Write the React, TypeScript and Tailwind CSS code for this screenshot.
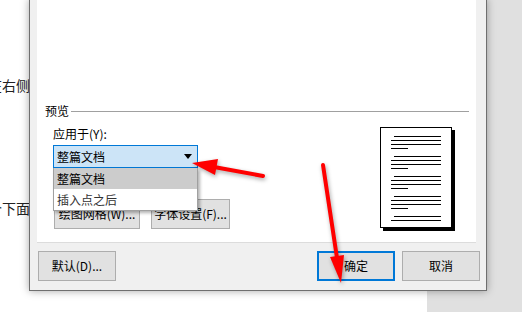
import React from 'react';

const font = { fontFamily: '"Noto Sans CJK SC", "Noto Sans", sans-serif' };

function PagePreview() {
  const groups = [9, 29, 49, 69];
  return (
    <svg width="76" height="105" viewBox="0 0 76 105">
      <rect x="3" y="3" width="72" height="101" fill="#000" />
      <rect x="0.5" y="0.5" width="71" height="100" fill="#fff" stroke="#000" />
      {groups.map((y) => (
        <g key={y} stroke="#000" strokeWidth="1">
          <line x1="14" y1={y + 0.5} x2="61" y2={y + 0.5} />
          <line x1="11" y1={y + 4.5} x2="61" y2={y + 4.5} />
          <line x1="11" y1={y + 8.5} x2="61" y2={y + 8.5} />
          <line x1="11" y1={y + 12.5} x2="28" y2={y + 12.5} />
        </g>
      ))}
      <g stroke="#000" strokeWidth="1">
        <line x1="14" y1="89.5" x2="61" y2="89.5" />
        <line x1="11" y1="93.5" x2="61" y2="93.5" />
      </g>
    </svg>
  );
}

function Button({ label, className = '' }: { label: string; className?: string }) {
  return (
    <div
      className={`flex items-center justify-center h-[30px] whitespace-nowrap bg-[#e1e1e1] border border-[#adadad] text-[12px] text-black ${className}`}
    >
      {label}
    </div>
  );
}

function Arrows() {
  return (
    <svg
      className="absolute inset-0 pointer-events-none"
      width="522"
      height="312"
      style={{ filter: 'drop-shadow(1px 2px 2px rgba(0,0,0,0.35))' }}
    >
      <line x1="263" y1="176" x2="214" y2="167" stroke="#ff0000" strokeWidth="4" strokeLinecap="round" />
      <polygon points="192,163 218,159 215,175" fill="#ff0000" />
      <line x1="323" y1="165" x2="337" y2="258" stroke="#ff0000" strokeWidth="4" strokeLinecap="round" />
      <polygon points="341,283 344,255 330,257" fill="#ff0000" />
    </svg>
  );
}

export default function App() {
  return (
    <div className="relative w-[522px] h-[312px] overflow-hidden flex bg-[#e0e0e0]" style={font}>
      {/* document page */}
      <div className="w-[427px] h-full bg-white text-[14px] leading-5 text-[#222] whitespace-nowrap">
        <div className="mt-[75px] ml-[-12px]">在右侧</div>
        <div className="mt-[103px] ml-[-12px]">个下面</div>
      </div>

      {/* dialog */}
      <div className="absolute left-[29px] top-[-1px] w-[458px] h-[292px] border border-[#6f6f6f] bg-[#f0f0f0] flex flex-col shadow-[0_0_8px_rgba(0,0,0,0.35)]">
        <div className="ml-[7px] w-[439px] h-[243px] bg-white border-b border-[#dcdcdc] pl-[8px] pr-[7px] pt-[103px]">
          <div className="flex items-center h-4">
            <span className="text-[12px] leading-4 text-black">预览</span>
            <div className="flex-1 h-px bg-[#a0a0a0] ml-[2px]" />
          </div>

          <div className="flex">
            <div className="pl-[8px] w-[153px] shrink-0">
              <div className="mt-[7px] text-[12px] leading-4 text-black">应用于(Y):</div>
              <div className="relative mt-[3px] h-[23px] w-[145px]">
                <div className="h-full border border-[#0078d7] bg-[#cce4f7] flex items-center pl-[3px] text-[12px] text-black">
                  整篇文档
                  <svg className="absolute right-[6px] top-[9px]" width="8" height="5">
                    <polygon points="0,0 8,0 4,5" fill="#000" />
                  </svg>
                </div>
                <div className="absolute left-0 top-[23px] w-[145px] z-10 bg-white border border-t-0 border-[#a0a0a0] shadow-[2px_2px_3px_rgba(0,0,0,0.3)] text-[12px]">
                  <div className="h-[21px] bg-[#cccccc] flex items-center pl-[3px] text-black">整篇文档</div>
                  <div className="h-[21px] bg-white flex items-center pl-[3px] text-[#333]">插入点之后</div>
                </div>
              </div>
              <div className="flex gap-[11px] mt-[31px] ml-[1px]">
                <Button label="绘图网格(W)..." className="w-[86px] shrink-0" />
                <Button label="字体设置(F)..." className="w-[79px] shrink-0" />
              </div>
            </div>
            <div className="ml-[182px] mt-[8px]">
              <PagePreview />
            </div>
          </div>
        </div>

        <div className="flex gap-[7px] pt-[8px] pl-[8px] pr-[6px]">
          <Button label="默认(D)..." className="w-[78px]" />
          <div className="ml-auto flex items-center justify-center w-[78px] h-[30px] bg-[#e1e1e1] border-2 border-[#0078d7] text-[12px] text-black">
            确定
          </div>
          <Button label="取消" className="w-[78px]" />
        </div>
      </div>

      <Arrows />
    </div>
  );
}
